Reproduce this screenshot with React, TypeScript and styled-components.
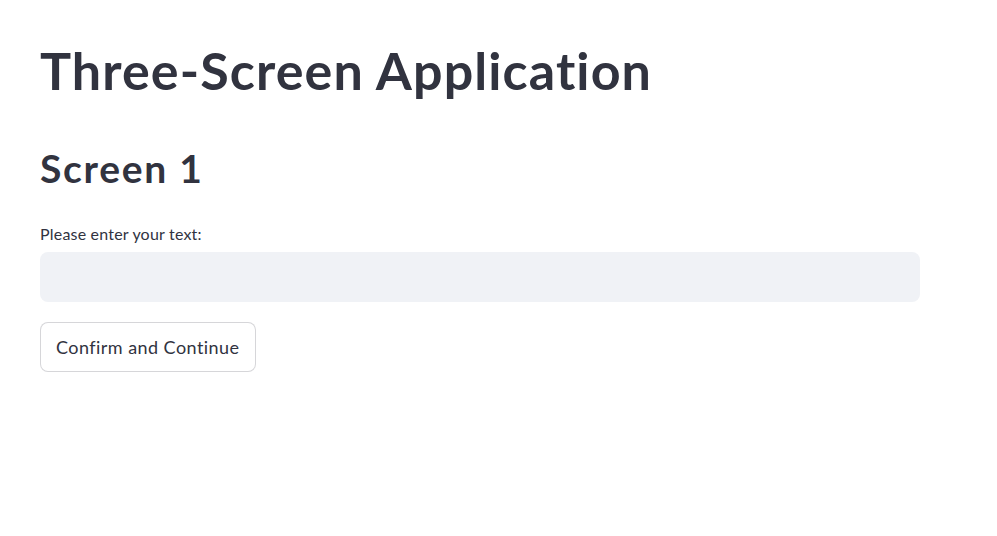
import React, { useState } from "react";
import styled, { createGlobalStyle } from "styled-components";

const GlobalStyle = createGlobalStyle`
  html, body { margin: 0; padding: 0; background: #ffffff; }
  body {
    font-family: Lato, "Noto Sans", sans-serif;
    color: rgb(49, 51, 63);
    font-variant-ligatures: none;
  }
  * { box-sizing: border-box; }
`;

const Main = styled.main`
  width: 880px;
  margin-left: 40px;
  padding-top: 38px;
  display: flex;
  flex-direction: column;
`;

const Title = styled.h1`
  margin: 0;
  font-size: 52px;
  font-weight: 700;
  letter-spacing: 1.1px;
  line-height: 64px;
`;

const Subtitle = styled.h2`
  margin: 42px 0 0 0;
  font-size: 39px;
  font-weight: 700;
  letter-spacing: 1.7px;
  line-height: 48px;
`;

const Field = styled.div`
  margin-top: 32px;
  display: flex;
  flex-direction: column;
  gap: 8px;
`;

const Label = styled.label`
  font-size: 16px;
  line-height: 20px;
  letter-spacing: 0.2px;
`;

const Input = styled.input`
  height: 50px;
  width: 100%;
  border: none;
  outline: none;
  border-radius: 8px;
  background: rgb(240, 242, 246);
  padding: 0 16px;
  font-family: inherit;
  font-size: 17px;
  color: rgb(49, 51, 63);
`;

const Button = styled.button`
  margin-top: 20px;
  align-self: flex-start;
  height: 50px;
  padding: 0 15px;
  border-radius: 8px;
  border: 1px solid rgba(49, 51, 63, 0.2);
  background: #ffffff;
  font-family: inherit;
  font-size: 18px;
  letter-spacing: 0.45px;
  color: rgb(49, 51, 63);
  cursor: pointer;
`;

export default function App() {
  const [text, setText] = useState("");
  return (
    <>
      <GlobalStyle />
      <Main>
        <Title>Three-Screen Application</Title>
        <Subtitle>Screen 1</Subtitle>
        <Field>
          <Label htmlFor="txt">Please enter your text:</Label>
          <Input id="txt" value={text} onChange={(e) => setText(e.target.value)} />
        </Field>
        <Button>Confirm and Continue</Button>
      </Main>
    </>
  );
}
